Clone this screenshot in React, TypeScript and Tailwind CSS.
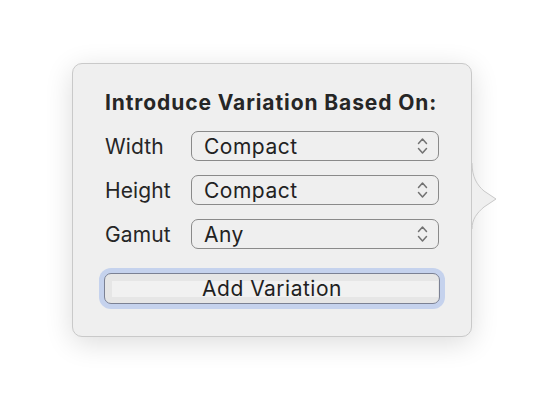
import React from 'react';

const font = { fontFamily: 'Inter, "Liberation Sans", sans-serif' };

function Chevrons() {
  return (
    <svg width="11" height="20" viewBox="0 0 11 20" fill="none" className="text-[#727272]">
      <path d="M1.5 7.5 L5.5 3 L9.5 7.5" stroke="currentColor" strokeWidth="1.5" strokeLinecap="round" strokeLinejoin="round" />
      <path d="M1.5 12.5 L5.5 17 L9.5 12.5" stroke="currentColor" strokeWidth="1.5" strokeLinecap="round" strokeLinejoin="round" />
    </svg>
  );
}

function PopupRow({ label, value }: { label: string; value: string }) {
  return (
    <div className="flex items-center">
      <span className="w-[86px] text-[21px] leading-none tracking-[0.1px] text-[#262626]">{label}</span>
      <div className="flex h-[30px] w-[248px] items-center justify-between rounded-[7px] border-[1.5px] border-[#8a8a8a] pl-[12px] pr-[10px]">
        <span className="text-[21px] leading-none tracking-[0.5px] text-[#222]">{value}</span>
        <Chevrons />
      </div>
    </div>
  );
}

export default function App() {
  const rows = [
    { label: 'Width', value: 'Compact' },
    { label: 'Height', value: 'Compact' },
    { label: 'Gamut', value: 'Any' },
  ];

  return (
    <div className="h-[416px] w-[544px] bg-white pl-[72px] pt-[63px]" style={font}>
      <div className="relative h-[274px] w-[400px] rounded-[10px] border border-[#c9c9c9] bg-[#efefef] shadow-[0_6px_28px_rgba(0,0,0,0.14)]">
        <svg
          className="absolute left-[398px] top-[99px]"
          width="27"
          height="66"
          viewBox="0 0 27 66"
        >
          <path d="M1 0 C1 14, 6 22, 13 28 L25 36 L13 44 C6 50, 1 56, 1 66 Z" fill="#efefef" />
          <path d="M1 0 C1 14, 6 22, 13 28 L25 36 L13 44 C6 50, 1 56, 1 66" fill="none" stroke="#c9c9c9" strokeWidth="1" />
        </svg>

        <div className="flex flex-col px-[32px] pt-[27px]">
          <h2 className="h-[24px] text-[21px] font-bold leading-[24px] tracking-[0.9px] text-[#262626]">
            Introduce Variation Based On:
          </h2>

          <div className="mt-[16px] flex flex-col gap-[14px]">
            {rows.map((r) => (
              <PopupRow key={r.label} label={r.label} value={r.value} />
            ))}
          </div>

          <div className="mt-[19px] w-[346px] -ml-[6px] rounded-[12px] bg-[#c5d2ed] p-[5px]">
            <div className="relative flex h-[31px] items-center justify-center rounded-[7px] border-[1.5px] border-[#7b8194] bg-[#e6e6e6]">
              <div className="absolute bottom-[6px] left-[7px] right-[1px] top-[7px] bg-[#f1f1f1]" />
              <span className="relative text-[21px] leading-none tracking-[0.5px] text-[#1f1f1f]">Add Variation</span>
            </div>
          </div>
        </div>
      </div>
    </div>
  );
}
